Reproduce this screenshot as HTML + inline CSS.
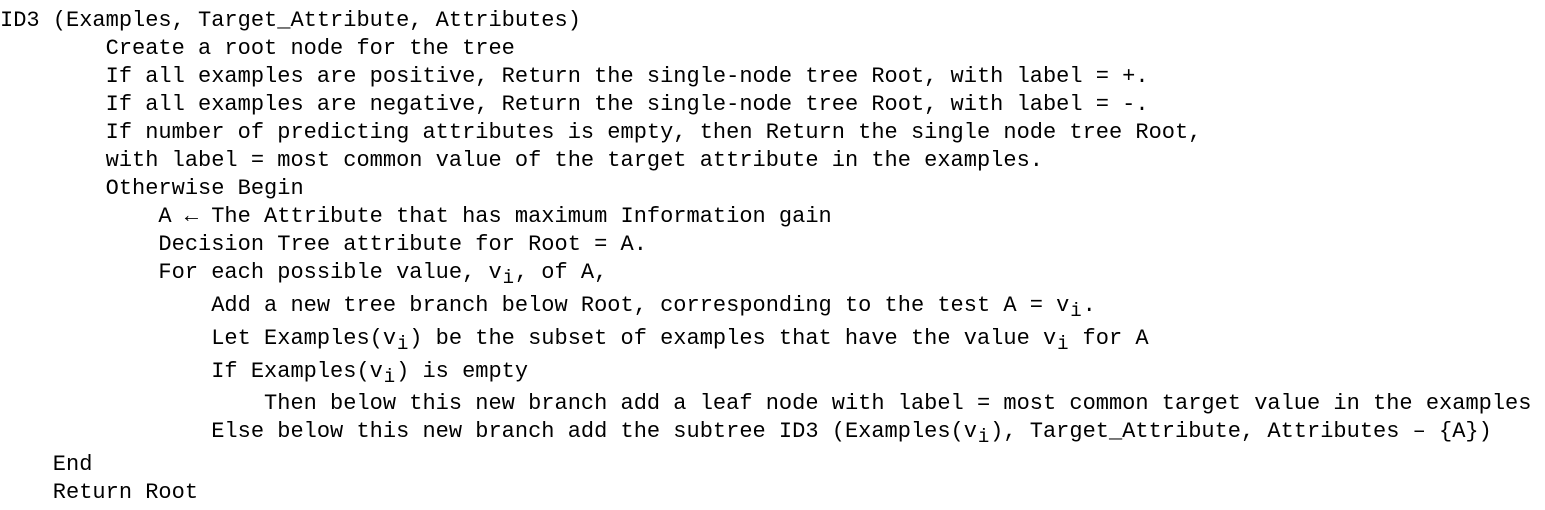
<!DOCTYPE html>
<html><head><meta charset="utf-8"><style>
body{margin:0;background:#fff;width:1545px;height:510px;overflow:hidden;position:relative}
.l{position:absolute;left:0;font-family:"Liberation Mono",monospace;font-size:22px;line-height:28px;color:#000;white-space:pre;height:28px}
.s{display:inline-block;width:13.2px;font-size:19px;position:relative;top:5px;text-align:center}
</style></head><body>
<div class="l" style="top:7px">ID3 (Examples, Target_Attribute, Attributes)</div>
<div class="l" style="top:35px">        Create a root node for the tree</div>
<div class="l" style="top:63px">        If all examples are positive, Return the single-node tree Root, with label = +.</div>
<div class="l" style="top:91px">        If all examples are negative, Return the single-node tree Root, with label = -.</div>
<div class="l" style="top:119px">        If number of predicting attributes is empty, then Return the single node tree Root,</div>
<div class="l" style="top:147px">        with label = most common value of the target attribute in the examples.</div>
<div class="l" style="top:175px">        Otherwise Begin</div>
<div class="l" style="top:203px">            A ← The Attribute that has maximum Information gain</div>
<div class="l" style="top:231px">            Decision Tree attribute for Root = A.</div>
<div class="l" style="top:259px">            For each possible value, v<span class="s">i</span>, of A,</div>
<div class="l" style="top:292px">                Add a new tree branch below Root, corresponding to the test A = v<span class="s">i</span>.</div>
<div class="l" style="top:325px">                Let Examples(v<span class="s">i</span>) be the subset of examples that have the value v<span class="s">i</span> for A</div>
<div class="l" style="top:358px">                If Examples(v<span class="s">i</span>) is empty</div>
<div class="l" style="top:390px">                    Then below this new branch add a leaf node with label = most common target value in the examples</div>
<div class="l" style="top:418px">                Else below this new branch add the subtree ID3 (Examples(v<span class="s">i</span>), Target_Attribute, Attributes – {A})</div>
<div class="l" style="top:451px">    End</div>
<div class="l" style="top:479px">    Return Root</div>
</body></html>
